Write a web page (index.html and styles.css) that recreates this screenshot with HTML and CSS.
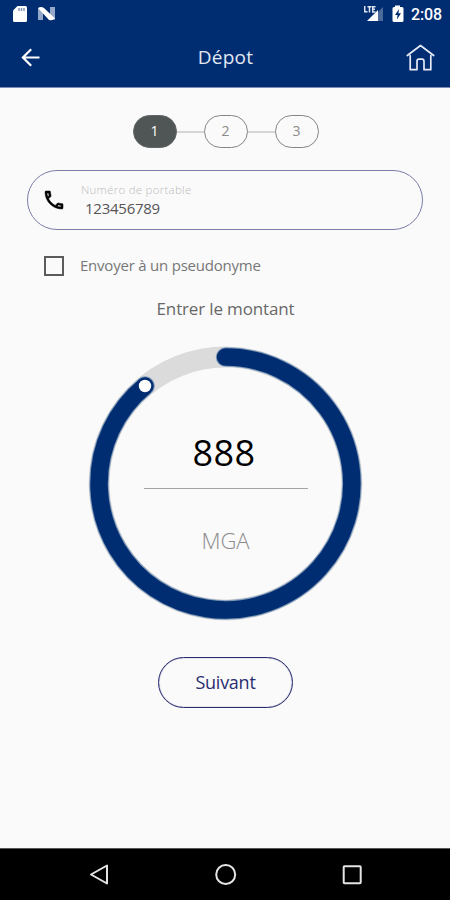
FILE: index.html
```html
<!DOCTYPE html>
<html lang="fr">
<head>
<meta charset="utf-8">
<title>Dépot</title>
<link rel="stylesheet" href="styles.css">
</head>
<body>
<div class="screen">
  <header class="header">
    <div class="status">
      <svg class="status-left" width="60" height="28" viewBox="0 0 60 28">
        <path fill="#fff" d="M17.500 6H25.500Q27 6 27 7.500V20.500Q27 22 25.500 22H14.500Q13 22 13 20.500V10.500Z"/>
        <path stroke="#8793b5" stroke-width="1.500" d="M19 8V11M21.500 8V11M24 8V11"/>
        <path fill="#94a9c9" d="M38 8L43 11V20H38ZM50 7H55V20L50 16Z"/>
        <path fill="#fff" d="M38 8Q41 6 44 8L55 18.500Q53 21 49 20Z"/>
      </svg>
      <div class="status-right">
        <svg width="40" height="28" viewBox="0 0 40 28">
          <path fill="#4c6b9a" d="M14 12L19 7V21H14Z"/>
          <path fill="#fff" d="M3 21L14 10V21Z"/>
          <path fill="none" stroke="#dfe4ef" stroke-width="1.500" d="M.7 6V11.800H3.500M3.500 6.700H7.500M5.500 6.500V12.500M11.500 6.700H8.700V12H11.500M8.700 9.200H11"/>
          <path fill="#fff" d="M31 5.500H36V7H38Q39.500 7 39.500 8.500V20.500Q39.500 22 38 22H30Q28.500 22 28.500 20.500V8.500Q28.500 7 30 7H31Z"/>
          <path fill="#002d72" d="M35 9L31 15H33.500L33 19.500L37 13.200H34.500Z"/>
        </svg>
        <span class="time">2:08</span>
      </div>
    </div>
    <div class="bar">
      <svg width="28" height="28" viewBox="0 0 28 28" fill="none" stroke="#fff" stroke-width="2.200"><path d="M21.500 14.500H5M13.200 6.200L4.900 14.500L13.200 22.800"/></svg>
      <h1 class="title">Dépot</h1>
      <svg width="30" height="30" viewBox="0 0 30 30" fill="none" stroke="#e6eaf5" stroke-width="1.700" stroke-linejoin="round" stroke-linecap="round"><path d="M2.300 13.500L15.500 3.500L28.700 13.500M5.200 13.500V27.700H12V19.500Q12 17.200 14 17.200H17Q19 17.200 19 19.500V27.700H25.800V13.500"/></svg>
    </div>
  </header>
  <main class="main">
    <div class="steps">
      <span class="step active">1</span><i class="link"></i><span class="step">2</span><i class="link"></i><span class="step">3</span>
    </div>
    <div class="field">
      <svg class="phone" width="24" height="24" viewBox="0 0 24 24"><path d="M6.540 5c.06.890.210 1.760.450 2.590l-1.200 1.200c-.410-1.200-.670-2.470-.760-3.790h1.510m9.860 12.020c.850.240 1.720.390 2.600.450v1.490c-1.320-.090-2.590-.350-3.800-.750l1.200-1.190M7.500 3H4c-.550 0-1 .450-1 1 0 9.390 7.610 17 17 17 .550 0 1-.450 1-1v-3.490c0-.550-.450-1-1-1-1.240 0-2.450-.200-3.570-.570-.360-.120-.750-.030-1.020.240l-2.200 2.200c-2.830-1.450-5.150-3.760-6.590-6.590l2.200-2.200c.270-.270.360-.660.240-1.010C8.700 6.450 8.500 5.250 8.500 4c0-.550-.450-1-1-1z"/></svg>
      <div class="field-text">
        <span class="label">Numéro de portable</span>
        <span class="value">123456789</span>
      </div>
    </div>
    <div class="check"><i class="box"></i><span class="check-label">Envoyer à un pseudonyme</span></div>
    <p class="prompt">Entrer le montant</p>
    <div class="dial">
      <svg class="ring" width="276" height="276" viewBox="-138.500 -138.500 276 276" fill="none">
        <circle r="126.400" stroke="#dbdbdb" stroke-width="21"/>
        <path d="M0-126.400A126.400 126.400 0 1 1-80.500-97.500" stroke="#7f9ab9" stroke-width="19.500" stroke-linecap="round"/>
        <path d="M0-126.400A126.400 126.400 0 1 1-80.500-97.500" stroke="#002d72" stroke-width="17.500" stroke-linecap="round"/>
        <circle cx="-80.500" cy="-97.500" r="6.200" fill="#fff"/>
      </svg>
      <div class="amount">
        <span class="number">888</span>
        <span class="currency">MGA</span>
      </div>
    </div>
    <div class="next">Suivant</div>
  </main>
  <footer class="nav">
    <svg width="24" height="24" viewBox="0 0 24 24"><path d="M4 11.500L20 2.500V20.500Z"/></svg>
    <svg width="24" height="24" viewBox="0 0 24 24"><circle cx="11.700" cy="11.500" r="9.500"/></svg>
    <svg width="24" height="24" viewBox="0 0 24 24"><rect x="3.700" y="3.200" width="17" height="17" rx=".8"/></svg>
  </footer>
</div>
</body>
</html>
```
FILE: styles.css
```css
* { box-sizing: border-box; }
body { margin: 0; font-family: "Open Sans", "Noto Sans", sans-serif; background: #fafafa; }
svg { display: block; flex: none; }
.screen { width: 450px; height: 900px; display: flex; flex-direction: column; overflow: hidden; }
.header { height: 88px; background: #002d72; color: #fff; border-bottom: 1px solid #7f89b1; }
.status { height: 28px; display: flex; justify-content: space-between; }
.status-right { display: flex; padding: 0 8px 0 0; gap: 7px; }
.time { width: 31px; font: 500 16px/29px Roboto, sans-serif; letter-spacing: -.1px; white-space: nowrap; }
.bar { height: 58px; display: flex; align-items: center; justify-content: space-between; padding: 0 15px 0 18px; }
.title { margin: 0; font-size: 19px; font-weight: 400; line-height: 28px; letter-spacing: .2px; color: #e3e8f3; }
.main { flex: 1; display: flex; flex-direction: column; align-items: center; padding-top: 27px; }
.steps { display: flex; align-items: center; margin-left: 1px; }
.step { width: 44px; height: 33px; border: 1px solid #858585; border-radius: 17px; text-align: center; font-size: 14px; line-height: 30px; color: #8b8b8b; }
.active { background: #505656; border-color: #606565; color: #fff; }
.link { width: 27px; height: 2px; background: #d5d5d5; }
.field { width: 396px; height: 60px; margin-top: 22px; border: 1px solid #7b7ca8; border-radius: 30px; display: flex; padding: 11px 0 0 14px; }
.phone { margin-top: 6px; stroke: #000; stroke-width: .5; }
.field-text { display: flex; flex-direction: column; margin-left: 15px; }
.label { font-size: 11.500px; line-height: 16px; color: #bdbdbd; font-weight: 300; letter-spacing: .27px; }
.value { font-size: 15px; line-height: 21px; margin-left: 4px; color: #555; letter-spacing: -.25px; }
.check { width: 362px; height: 20px; margin-top: 26px; display: flex; align-items: center; gap: 16px; }
.box { width: 20px; height: 20px; border: 2px solid #5b5b5b; }
.check-label { font-size: 15px; line-height: 20px; color: #777; margin-top: -2px; letter-spacing: -.22px; }
.prompt { margin: 21px 0 0 1px; font-size: 17px; line-height: 24px; color: #686868; letter-spacing: -.15px; }
.dial { display: grid; width: 276px; height: 276px; margin-top: 24px; place-items: center; }
.ring, .amount { grid-area: 1 / 1; }
.amount { width: 164px; height: 140px; display: flex; flex-direction: column; text-align: center; margin-left: 1px; }
.number { height: 76px; border-bottom: 1px solid #a5a5a5; font-size: 36px; line-height: 79px; letter-spacing: .4px; padding-right: 3px; color: #000; }
.currency { font-size: 22px; line-height: 102px; color: #8c8c8c; font-weight: 300; }
.next { width: 135px; height: 51px; margin-top: 36px; margin-left: 1px; border: 1.500px solid #292d70; border-radius: 26px; text-align: center; font-size: 18px; line-height: 48px; letter-spacing: -.25px; color: #292d70; box-shadow: inset 0 0 1px #292d70; }
.nav { height: 52px; background: #000; border-top: 1px solid #555; display: flex; align-items: center; justify-content: space-between; padding: 0 86px 0 87px; }
.nav svg { fill: none; stroke: #e4e4e4; stroke-width: 2; stroke-linejoin: round; }
```
